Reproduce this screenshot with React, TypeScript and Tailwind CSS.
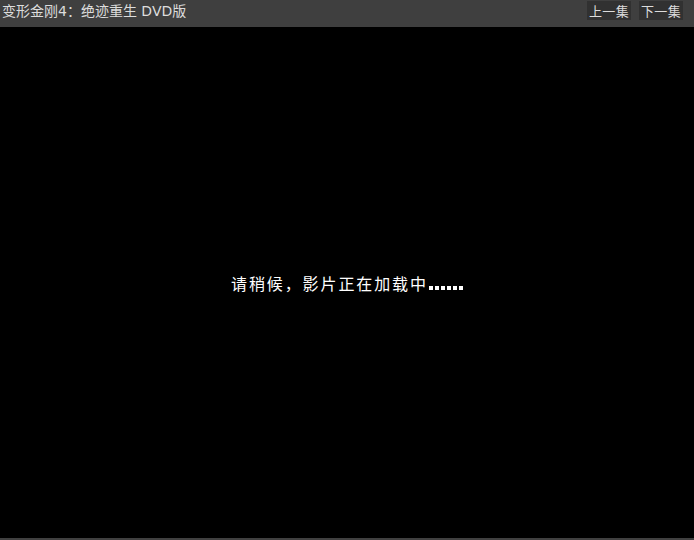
import React from 'react';

const cjk = { fontFamily: '"Noto Sans CJK SC", "Noto Sans", sans-serif' };
const mixed = { fontFamily: '"DejaVu Sans", "Noto Sans CJK SC", sans-serif' };

export default function App() {
  return (
    <div className="w-[694px] h-[540px] flex flex-col bg-black overflow-hidden" style={cjk}>
      {/* Title bar */}
      <div className="h-[27px] shrink-0 bg-[#3f3f3f] flex items-start justify-between pl-[2px] pr-[11px]">
        <span className="text-[14px] leading-[23px] text-[#dcdcdc]" style={mixed}>
          变形金刚4：绝迹重生 DVD版
        </span>
        <div className="flex gap-[8px] pt-[1px]">
          <button className="h-[19px] w-[44px] bg-[#313131] text-[13px] leading-[19px] tracking-[0.3px] text-[#dcdcdc]">上一集</button>
          <button className="h-[19px] w-[44px] bg-[#313131] text-[13px] leading-[19px] tracking-[0.3px] text-[#dcdcdc]">下一集</button>
        </div>
      </div>

      {/* Player area */}
      <div className="flex-1 flex items-center justify-center">
        <p className="flex items-end text-[16px] leading-[20px] text-white">
          <span className="inline-block w-[195px] [text-align-last:justify]">请稍候，影片正在加载中</span>
          <span className="flex gap-[2px] ml-[3px] mb-[3px]">
            <i className="block w-[4px] h-[4px] bg-white" />
            <i className="block w-[4px] h-[4px] bg-white" />
            <i className="block w-[4px] h-[4px] bg-white" />
            <i className="block w-[4px] h-[4px] bg-white" />
            <i className="block w-[4px] h-[4px] bg-white" />
            <i className="block w-[4px] h-[4px] bg-white" />
          </span>
        </p>
      </div>

      <div className="h-[2px] shrink-0 bg-[#404040]" />
    </div>
  );
}
